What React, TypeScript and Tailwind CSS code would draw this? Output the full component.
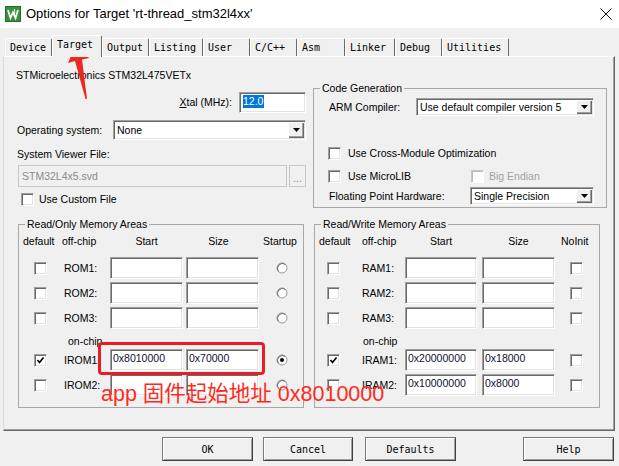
import React from "react";

const SUNKEN =
  "border border-t-[#a0a0a0] border-l-[#a0a0a0] border-r-white border-b-white shadow-[inset_1px_1px_0_#696969,inset_-1px_-1px_0_#e3e3e3]";
const MONO = "font-['DejaVu_Sans_Mono',monospace]";

const tabs = [
  { label: "Device", cls: "w-[47px]" },
  { label: "Target", cls: "w-[50px]", active: true },
  { label: "Output", cls: "w-[47px]" },
  { label: "Listing", cls: "w-[54px]" },
  { label: "User", cls: "w-[47px]" },
  { label: "C/C++", cls: "w-[47px]" },
  { label: "Asm", cls: "w-[48px]" },
  { label: "Linker", cls: "w-[50px]" },
  { label: "Debug", cls: "w-[47px]" },
  { label: "Utilities", cls: "w-[67px]" },
];

const Check = ({ checked = false, disabled = false }: { checked?: boolean; disabled?: boolean }) => (
  <span
    className={`inline-flex w-[13px] h-[13px] shrink-0 items-center justify-center bg-white border ${
      disabled
        ? "border-t-[#c8c8c8] border-l-[#c8c8c8] border-r-white border-b-white shadow-[inset_1px_1px_0_#bcbcbc]"
        : "border-t-[#a0a0a0] border-l-[#a0a0a0] border-r-white border-b-white shadow-[inset_1px_1px_0_#696969,inset_-1px_-1px_0_#e3e3e3]"
    }`}
  >
    {checked && (
      <svg width="9" height="9" viewBox="0 0 9 9">
        <path d="M1.5 4 L3.5 6.5 L7.5 1.5" stroke="#000" strokeWidth="1.7" fill="none" />
      </svg>
    )}
  </span>
);

const Radio = ({ on = false }: { on?: boolean }) => (
  <svg width="12" height="12" viewBox="0 0 12 12" className="shrink-0">
    <circle cx="6" cy="6" r="5" fill="#fff" stroke="#9a9a9a" />
    <path d="M2.5 9.5 A5 5 0 0 1 9.5 2.5" stroke="#6f6f6f" fill="none" />
    {on && <circle cx="6" cy="6" r="2" fill="#000" />}
  </svg>
);

const Arrow = () => (
  <svg width="7" height="4" viewBox="0 0 7 4">
    <path d="M0 0 H7 L3.5 4 Z" fill="#000" />
  </svg>
);

const Select = ({ value, cls }: { value: string; cls: string }) => (
  <div className={`flex items-stretch bg-white ${SUNKEN} ${cls}`}>
    <span className="flex-1 flex items-center pl-[3px] whitespace-nowrap overflow-hidden">{value}</span>
    <span className="w-[16px] m-px flex items-center justify-center bg-[#f0f0f0] shadow-[inset_1px_1px_0_#fff,inset_-1px_-1px_0_#696969,inset_-2px_-2px_0_#a0a0a0]">
      <Arrow />
    </span>
  </div>
);

const Box = ({ value = "", cls }: { value?: string; cls: string }) => (
  <div className={`flex items-start pt-[2px] pl-[2px] bg-white text-[#101030] ${SUNKEN} ${cls}`}>{value}</div>
);

const Group = ({ title, cls, children }: { title: string; cls: string; children: React.ReactNode }) => (
  <fieldset className={`border border-[#a8a8a8] ${cls}`}>
    <legend className="ml-[6px] px-[2px] leading-[13px]">{title}</legend>
    {children}
  </fieldset>
);

const RoRow = ({ label, start = "", size = "", checked = false, on = false, first = false }: any) => (
  <div className={`flex items-center h-[22px] ${first ? "mt-[9px]" : "mt-[3px]"}`}>
    <div className="w-[42px] pl-[15px] flex">
      <Check checked={checked} />
    </div>
    <div className="w-[49px] pl-[3px]">{label}</div>
    <Box value={start} cls="w-[73px] h-[22px]" />
    <div className="w-[3px]" />
    <Box value={size} cls="w-[73px] h-[22px]" />
    <div className="w-[44px] pl-[17px] flex">
      <Radio on={on} />
    </div>
  </div>
);

const RwRow = ({ label, start = "", size = "", checked = false, first = false }: any) => (
  <div className={`flex items-center h-[22px] ${first ? "mt-[9px]" : "mt-[3px]"}`}>
    <div className="w-[35px] pl-[12px] flex">
      <Check checked={checked} />
    </div>
    <div className="w-[55px] pl-[12px]">{label}</div>
    <Box value={start} cls="w-[72px] h-[22px]" />
    <div className="w-[5px]" />
    <Box value={size} cls="w-[73px] h-[22px]" />
    <div className="w-[44px] pl-[15px] flex">
      <Check />
    </div>
  </div>
);

const Button = ({ label, cls }: { label: string; cls: string }) => (
  <div
    className={`h-[24px] flex items-center justify-center bg-[#f0f0f0] border border-[#7a7a7a] border-r-[#404040] border-b-[#404040] shadow-[inset_1px_1px_0_#fff,inset_-1px_-1px_0_#a0a0a0] ${MONO} text-[10px] ${cls}`}
  >
    {label}
  </div>
);

export default function App() {
  return (
    <div className="relative w-[619px] h-[466px] bg-[#f0f0f0] overflow-hidden text-[10.5px] leading-[13px] text-black font-['Liberation_Sans',Arial,sans-serif]">
      {/* title bar */}
      <div className="h-[28px] bg-white flex items-center pl-[5px] pr-[7px]">
        <svg width="16" height="16" viewBox="0 0 16 16">
          <rect x="0.5" y="0.5" width="15" height="15" fill="#3a8f3f" stroke="#23702a" />
          <path d="M3 4 L5.5 12 L8 6.5 L10.5 12 L13 4" stroke="#fff" strokeWidth="1.8" fill="none" />
          <path d="M9.5 3 L9.5 8" stroke="#d9f0d9" strokeWidth="1.2" />
        </svg>
        <span className="ml-[5px] text-[13px] leading-[16px]">Options for Target 'rt-thread_stm32l4xx'</span>
        <svg className="ml-auto" width="12" height="12" viewBox="0 0 12 12">
          <path d="M0.5 0.5 L11.5 11.5 M11.5 0.5 L0.5 11.5" stroke="#111" strokeWidth="1" />
        </svg>
      </div>

      {/* tabs */}
      <div className="flex items-end pl-[5px] pt-[7px]">
        {tabs.map((t) => (
          <div
            key={t.label}
            className={`${t.cls} flex items-center pl-[4px] border-t border-l border-r border-t-white border-l-white border-r-[#696969] rounded-t-[2px] ${MONO} text-[10px] leading-[13px] ${
              t.active ? "h-[22px] -mb-px relative z-10 bg-[#f0f0f0] items-start pt-[2px]" : "h-[18px]"
            }`}
          >
            {t.label}
          </div>
        ))}
      </div>

      {/* panel */}
      <div className="ml-[3px] w-[612px] h-[375px] border border-t-white border-l-[#dcdcdc] border-r-[#696969] border-b-[#696969] shadow-[inset_-1px_-1px_0_#a0a0a0]">
        <div className="flex h-[153px]">
          {/* left column */}
          <div className="ml-[12px] w-[290px] flex flex-col">
            <div className="mt-[12px]">STMicroelectronics STM32L475VETx</div>
            <div className="mt-[10px] h-[21px] flex items-center justify-end gap-[7px]">
              <span>
                <span className="underline">X</span>tal (MHz):
              </span>
              <div className={`w-[67px] h-[21px] flex items-start pt-[2px] pl-[3px] bg-white ${SUNKEN}`}>
                <span className="bg-[#0078d7] text-white pr-px">12.0</span>
              </div>
            </div>
            <div className="mt-[7px] h-[20px] flex items-center">
              <span className="w-[97px] pl-[1px]">Operating system:</span>
              <Select value="None" cls="w-[193px] h-[20px]" />
            </div>
            <div className="mt-[8px] pl-[1px]">System Viewer File:</div>
            <div className="mt-[4px] h-[22px] flex pl-[2px]">
              <div className="w-[269px] h-[22px] flex items-center pl-[3px] bg-[#f0f0f0] text-[#8a8a8a] border border-[#c8c8c8]">
                STM32L4x5.svd
              </div>
              <div className="ml-[2px] w-[17px] h-[22px] flex items-end justify-center pb-[4px] text-[#8a8a8a] bg-[#f0f0f0] border border-[#c8c8c8] leading-[8px]">
                ...
              </div>
            </div>
            <div className="mt-[6px] flex items-center pl-[5px] gap-[5px]">
              <Check />
              <span>Use Custom File</span>
            </div>
          </div>

          {/* code generation */}
          <Group title="Code Generation" cls="ml-[7px] mt-[25px] w-[294px] h-[126px]">
            <div className="mt-[3px] h-[18px] flex items-center pl-[15px]">
              <span className="w-[87px]">ARM Compiler:</span>
              <Select value="Use default compiler version 5" cls="w-[178px] h-[18px]" />
            </div>
            <div className="mt-[31px] flex items-center pl-[14px] gap-[7px]">
              <Check />
              <span>Use Cross-Module Optimization</span>
            </div>
            <div className="mt-[10px] flex items-center pl-[14px]">
              <div className="w-[143px] flex items-center gap-[7px]">
                <Check />
                <span>Use MicroLIB</span>
              </div>
              <div className="flex items-center gap-[5px] text-[#a0a0a0]">
                <Check disabled />
                <span>Big Endian</span>
              </div>
            </div>
            <div className="mt-[4px] h-[18px] flex items-center pl-[15px]">
              <span className="w-[141px]">Floating Point Hardware:</span>
              <Select value="Single Precision" cls="w-[124px] h-[18px]" />
            </div>
          </Group>
        </div>

        <div className="mt-[8px] flex">
          <Group title="Read/Only Memory Areas" cls="ml-[14px] w-[286px] h-[190px]">
            <div className="mt-[4px] h-[13px] flex">
              <div className="w-[42px] pl-[4px]">default</div>
              <div className="w-[49px] pl-[1px]">off-chip</div>
              <div className="w-[73px] text-center">Start</div>
              <div className="w-[3px]" />
              <div className="w-[73px] text-center pr-[8px]">Size</div>
              <div className="w-[44px] pl-[4px]">Startup</div>
            </div>
            <RoRow label="ROM1:" first />
            <RoRow label="ROM2:" />
            <RoRow label="ROM3:" />
            <div className="mt-[6px] h-[13px] ml-[49px]">on-chip</div>
            <div className="mt-[-8px]">
              <RoRow label="IROM1:" start="0x8010000" size="0x70000" checked on first />
            </div>
            <RoRow label="IROM2:" />
          </Group>

          <Group title="Read/Write Memory Areas" cls="ml-[10px] w-[286px] h-[190px]">
            <div className="mt-[4px] h-[13px] flex">
              <div className="w-[35px] pl-[4px]">default</div>
              <div className="w-[55px] pl-[12px]">off-chip</div>
              <div className="w-[72px] text-center">Start</div>
              <div className="w-[5px]" />
              <div className="w-[73px] text-center">Size</div>
              <div className="w-[44px] pl-[6px]">NoInit</div>
            </div>
            <RwRow label="RAM1:" first />
            <RwRow label="RAM2:" />
            <RwRow label="RAM3:" />
            <div className="mt-[6px] h-[13px] ml-[48px]">on-chip</div>
            <div className="mt-[-8px]">
              <RwRow label="IRAM1:" start="0x20000000" size="0x18000" checked first />
            </div>
            <RwRow label="IRAM2:" start="0x10000000" size="0x8000" />
          </Group>
        </div>
      </div>

      {/* buttons */}
      <div className="mt-[6px] flex pl-[162px]">
        <Button label="OK" cls="w-[91px]" />
        <Button label="Cancel" cls="ml-[10px] w-[90px]" />
        <Button label="Defaults" cls="ml-[12px] w-[91px]" />
        <Button label="Help" cls="ml-[67px] w-[91px]" />
      </div>

      {/* red annotations */}
      <svg className="absolute left-0 top-0 pointer-events-none" width="100" height="110" viewBox="0 0 100 110">
        <path d="M77 42 L89 58 L82 59.5 L87 99 L85.5 99 L75 61 L68 63 Z" fill="#ea2a1f" />
      </svg>
      <div className="absolute left-[98px] top-[342px] w-[167px] h-[33px] border-[3px] border-[#ec1c24] rounded-[4px] pointer-events-none" />
      <div className="absolute left-[101px] top-[381px] text-[21.5px] leading-[26px] text-[#ff2a22] whitespace-nowrap font-['Liberation_Sans','Noto_Sans_CJK_SC',sans-serif]">
        app 固件起始地址 0x8010000
      </div>
    </div>
  );
}
